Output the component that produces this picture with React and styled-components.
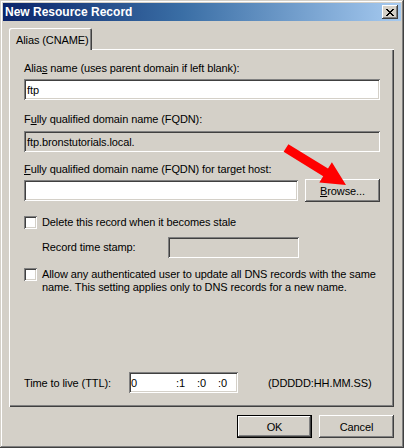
import React from 'react';
import styled, { createGlobalStyle, css } from 'styled-components';

const Global = createGlobalStyle`
  html, body { margin: 0; padding: 0; background: #d4d0c8; }
  body { font-family: "Liberation Sans", Arial, sans-serif; font-size: 11px; color: #000; }
  * { box-sizing: border-box; }
`;

const raised = css`
  box-shadow: inset -1px -1px #404040, inset 1px 1px #fff, inset -2px -2px #808080, inset 2px 2px #d4d0c8;
`;
const sunken = css`
  box-shadow: inset 1px 1px #808080, inset -1px -1px #fff, inset 2px 2px #404040, inset -2px -2px #d4d0c8;
`;

const Window = styled.div`
  position: relative;
  width: 404px;
  height: 448px;
  display: flex;
  flex-direction: column;
  padding: 3px;
  background: #d4d0c8;
  box-shadow: inset -1px -1px #404040, inset 1px 1px #d4d0c8, inset -2px -2px #808080, inset 2px 2px #fff;
`;

const TitleBar = styled.div`
  height: 18px;
  display: flex;
  align-items: center;
  padding: 0 3px 0 2px;
  background: linear-gradient(to right, #0a246a 0%, #3a6ea5 45%, #a6caf0 100%);
`;

const Title = styled.div`
  color: #fff;
  font-weight: bold;
  font-size: 12px;
`;

const CloseButton = styled.div`
  margin-left: auto;
  width: 16px;
  height: 14px;
  background: #d4d0c8;
  display: flex;
  align-items: center;
  justify-content: center;
  ${raised}
`;

const Body = styled.div`
  flex: 1;
  display: flex;
  flex-direction: column;
  padding: 7px 7px 7px 6px;
`;

const TabStrip = styled.div`
  display: flex;
  height: 21px;
`;

const Tab = styled.div`
  position: relative;
  z-index: 1;
  width: 83px;
  height: 22px;
  margin-bottom: -1px;
  padding: 1px 0 0 7px;
  display: flex;
  align-items: center;
  background: #d4d0c8;
  border-radius: 2px 2px 0 0;
  letter-spacing: -0.1px;
  box-shadow: inset 1px 1px #fff, inset -1px 0 #404040, inset -2px 0 #808080;
`;

const Panel = styled.div`
  flex: 1;
  display: flex;
  flex-direction: column;
  padding: 13px 14px 14px 15px;
  box-shadow: inset 1px 1px #fff, inset -1px -1px #404040, inset -2px -2px #808080;
  letter-spacing: -0.1px;
`;

const Label = styled.div`
  line-height: 13px;
  margin-top: ${(p) => p.$mt || 0}px;
  white-space: nowrap;
`;

const Key = styled.span`
  text-decoration: underline;
`;

const TextBox = styled.div`
  height: 21px;
  display: flex;
  align-items: center;
  padding: 0 3px;
  margin-top: ${(p) => p.$mt || 0}px;
  width: ${(p) => (p.$w ? `${p.$w}px` : 'auto')};
  flex: ${(p) => (p.$grow ? 1 : 'none')};
  background: ${(p) => (p.$gray ? '#d4d0c8' : '#fff')};
  ${sunken}
`;

const Row = styled.div`
  display: flex;
  align-items: ${(p) => p.$align || 'center'};
  gap: ${(p) => p.$gap || 0}px;
  margin-top: ${(p) => (p.$auto ? 'auto' : `${p.$mt || 0}px`)};
`;

const Button = styled.div`
  width: 75px;
  height: 23px;
  display: flex;
  align-items: center;
  justify-content: center;
  background: #d4d0c8;
  letter-spacing: -0.1px;
  ${(p) =>
    p.$default
      ? css`
          box-shadow: inset 0 0 0 1px #000, inset -2px -2px #404040, inset 2px 2px #fff, inset -3px -3px #808080;
        `
      : raised}
`;

const CheckBox = styled.div`
  width: 13px;
  height: 13px;
  flex: none;
  background: #fff;
  ${sunken}
`;

const CheckLabel = styled.div`
  line-height: 13px;
  margin-left: 5px;
`;

const SubLabel = styled.div`
  width: 126px;
  margin-left: 18px;
  line-height: 13px;
`;

const TtlLabel = styled.div`
  width: 105px;
`;

const TtlBox = styled.div`
  width: 109px;
  height: 21px;
  display: flex;
  align-items: center;
  padding-left: 2px;
  background: #fff;
  ${sunken}
`;

const TtlPart = styled.span`
  width: ${(p) => p.$w}px;
  flex: none;
`;

const Format = styled.div`
  margin-left: 30px;
`;

const ButtonRow = styled.div`
  display: flex;
  justify-content: flex-end;
  gap: 7px;
  margin-top: 8px;
`;

const Overlay = styled.svg`
  position: absolute;
  left: 0;
  top: 0;
  pointer-events: none;
`;

export default function App() {
  return (
    <>
      <Global />
      <Window>
        <TitleBar>
          <Title>New Resource Record</Title>
          <CloseButton>
            <svg width="8" height="7" viewBox="0 0 8 7" shapeRendering="crispEdges">
              <path d="M0 0h2v1h1v1h2V1h1V0h2v1H7v1H6v1H5v1h1v1h1v1h1v1H6V6H5V5H3v1H2v1H0V6h1V5h1V4h1V3H2V2H1V1H0z" fill="#000" />
            </svg>
          </CloseButton>
        </TitleBar>
        <Body>
          <TabStrip>
            <Tab>Alias (CNAME)</Tab>
          </TabStrip>
          <Panel>
            <Label>
              Alia<Key>s</Key> name (uses parent domain if left blank):
            </Label>
            <TextBox $mt={4}>ftp</TextBox>
            <Label $mt={13}>
              F<Key>u</Key>lly qualified domain name (FQDN):
            </Label>
            <TextBox $mt={5} $gray>
              ftp.bronstutorials.local.
            </TextBox>
            <Label $mt={11}>
              <Key>F</Key>ully qualified domain name (FQDN) for target host:
            </Label>
            <Row $mt={3} $gap={7}>
              <TextBox $grow />
              <Button>
                <span>
                  <Key>B</Key>rowse...
                </span>
              </Button>
            </Row>
            <Row $mt={14}>
              <CheckBox />
              <CheckLabel>Delete this record when it becomes stale</CheckLabel>
            </Row>
            <Row $mt={8}>
              <SubLabel>Record time stamp:</SubLabel>
              <TextBox $w={131} $gray />
            </Row>
            <Row $mt={10} $align="flex-start">
              <CheckBox />
              <CheckLabel>
                Allow any authenticated user to update all DNS records with the same
                <br />
                name. This setting applies only to DNS records for a new name.
              </CheckLabel>
            </Row>
            <Row $auto>
              <TtlLabel>Time to live (TTL):</TtlLabel>
              <TtlBox>
                <TtlPart $w={45}>0</TtlPart>
                <TtlPart $w={21}>:1</TtlPart>
                <TtlPart $w={21}>:0</TtlPart>
                <TtlPart $w={15}>:0</TtlPart>
              </TtlBox>
              <Format>(DDDDD:HH.MM.SS)</Format>
            </Row>
          </Panel>
          <ButtonRow>
            <Button $default>OK</Button>
            <Button>Cancel</Button>
          </ButtonRow>
        </Body>
        <Overlay width="404" height="448" viewBox="0 0 404 448">
          <polygon
            points="288.4,144.2 328,168.6 331.9,162.2 346,185 319.3,182.6 323.2,176.2 283.6,151.8"
            fill="#ff0000"
          />
        </Overlay>
      </Window>
    </>
  );
}
